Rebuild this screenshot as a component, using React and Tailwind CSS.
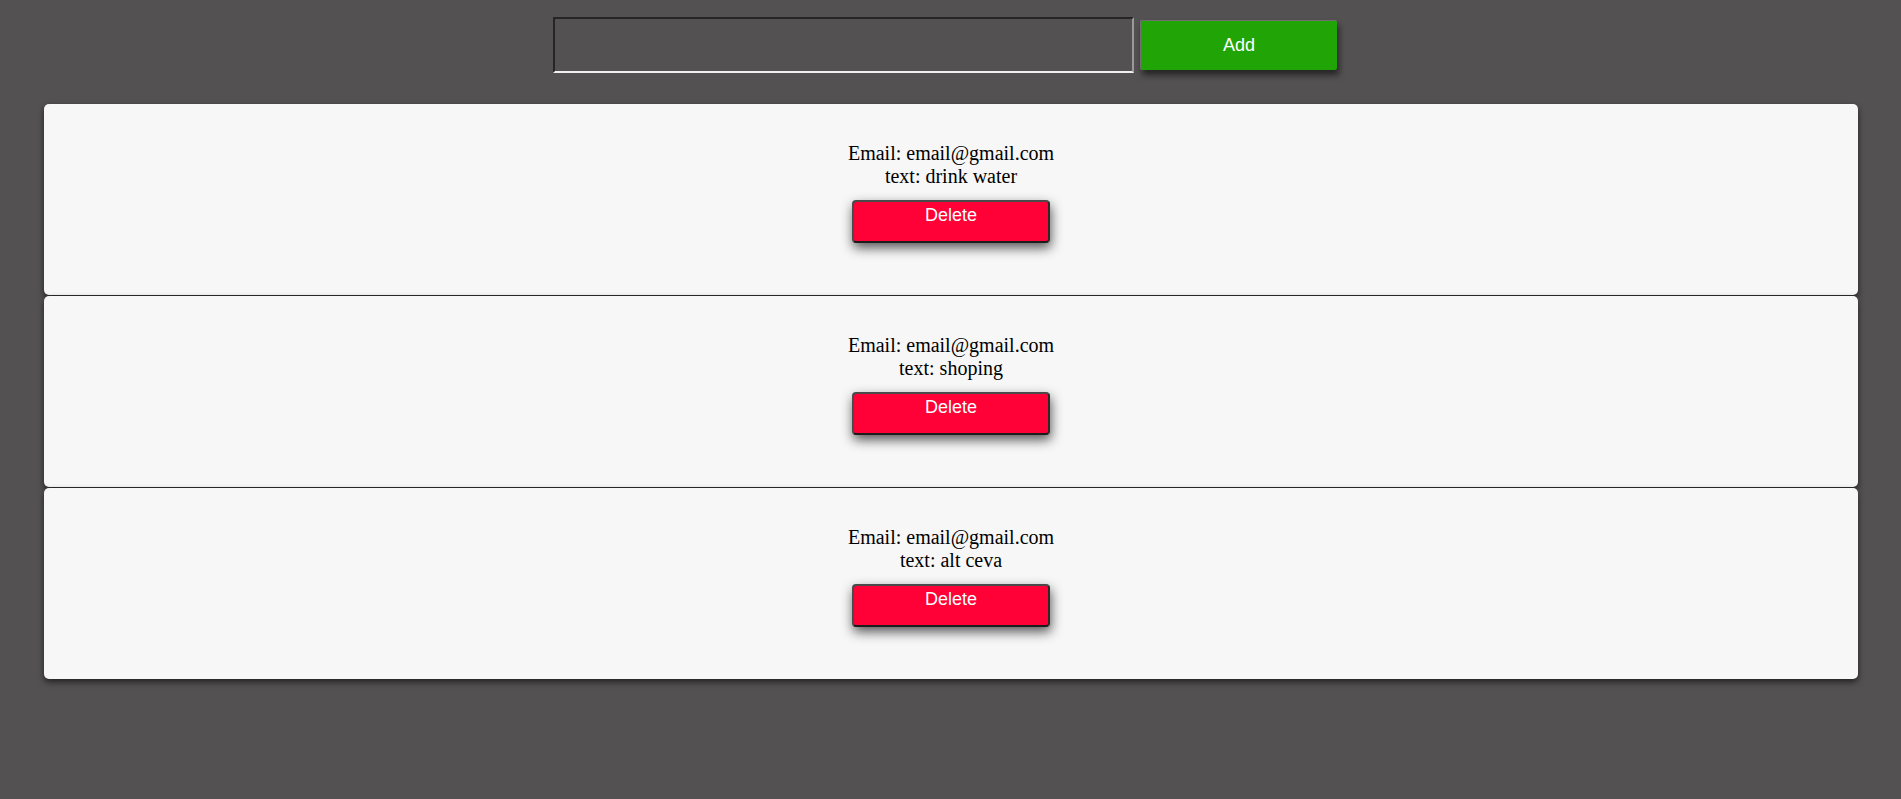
import React, { useState } from 'react';

const App = () => {
  const [text, setText] = useState('');
  const [notes, setNotes] = useState([
    { id: 1, email: 'email@gmail.com', text: 'drink water' },
    { id: 2, email: 'email@gmail.com', text: 'shoping' },
    { id: 3, email: 'email@gmail.com', text: 'alt ceva' },
  ]);

  // add a new note for the current user
  const handleAdd = () => {
    if (!text) return;
    setNotes([...notes, { id: Date.now(), email: 'email@gmail.com', text }]);
    setText('');
  };

  const handleDelete = (id) => {
    setNotes(notes.filter((n) => n.id !== id));
  };

  return (
    <div className="min-h-[799px] bg-[#535152] pt-[17px]">
      <div className="flex justify-center">
        <input
          type="text"
          value={text}
          onChange={(e) => setText(e.target.value)}
          className="w-[581px] h-[56px] bg-[#535152] border-2 border-t-[#262626] border-l-[#262626] border-b-[#f0f0f0] border-r-[#9a9a9a] outline-none text-white px-2"
        />
        <button
          onClick={handleAdd}
          className="ml-[6px] mr-[11px] mt-[3px] w-[197px] h-[50px] bg-[#21a506] text-white text-[18px] border-t border-l border-[#707070] rounded-[2px] shadow-[2px_5px_6px_rgba(0,0,0,0.55)]"
          style={{ fontFamily: '"Liberation Sans", Arial, sans-serif' }}
        >
          Add
        </button>
      </div>

      <div className="mt-[31px] px-[44px] pr-[43px]">
        {notes.map((note) => (
          <div
            key={note.id}
            className="h-[191px] mb-px bg-[#f7f7f7] rounded-[5px] shadow-[0_3px_6px_rgba(0,0,0,0.6)] flex flex-col items-center pt-[38px]"
          >
            <div
              className="text-center text-[20px] leading-[23px] text-black"
              style={{ fontFamily: '"Liberation Serif", "Times New Roman", serif' }}
            >
              <p>Email: {note.email}</p>
              <p>text: {note.text}</p>
            </div>
            <button
              onClick={() => handleDelete(note.id)}
              className="mt-[12px] w-[198px] h-[43px] flex justify-center items-start bg-[#ff0037] text-white text-[18px] border-2 border-[#4a4a4a] border-b-[#1c1c1c] border-r-[#2a2a2a] rounded-[4px] shadow-[1px_5px_12px_rgba(0,0,0,0.65)]"
              style={{ fontFamily: '"Liberation Sans", Arial, sans-serif' }}
            >
              Delete
            </button>
          </div>
        ))}
      </div>
    </div>
  );
};

export default App;
